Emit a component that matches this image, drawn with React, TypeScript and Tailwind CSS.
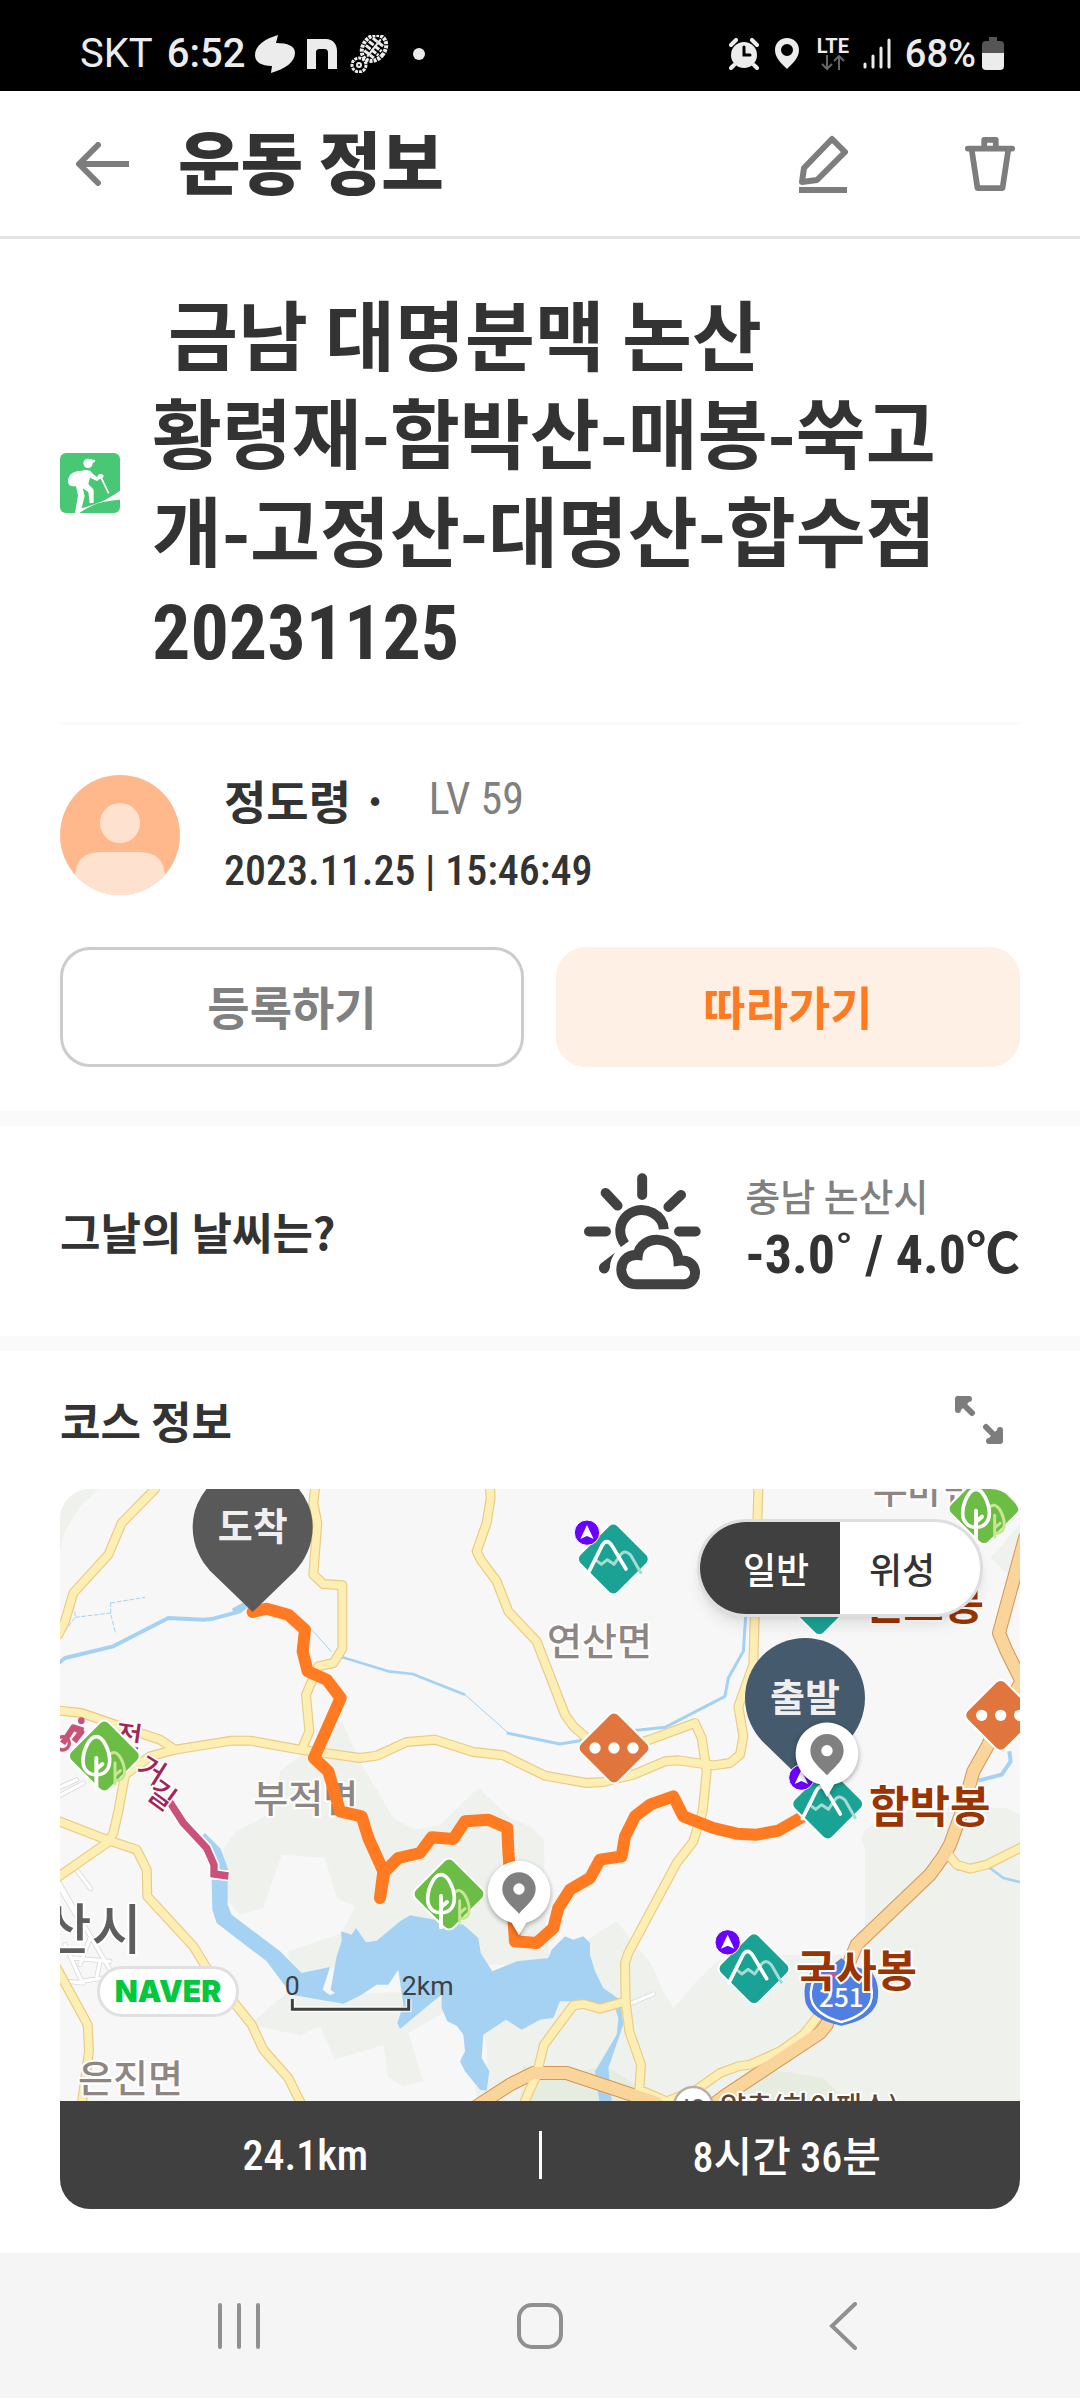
import React from "react";

const narrow = "font-['Roboto_Condensed','Noto_Sans_CJK_KR',sans-serif]";

function StatusBar() {
  return (
    <div className="flex h-[91px] items-center justify-between bg-black pt-4 pr-[76px] pb-0 pl-20 font-['Roboto',sans-serif] text-[40px] leading-none text-[#ececec]">
      <div className="flex items-center">
        <span>SKT</span>
        <span className="ml-3.5 font-medium">6:52</span>
        <svg className="ml-2.5 h-[38px] w-10" viewBox="0 0 40 38" fill="#ececec">
          <path d="M23 0C9 4 0 11 0 20c0 7 6 11 17 11l-1 7c14-4 24-11 24-20 0-7-7-10-19-10Z" />
        </svg>
        <svg className="ml-3 h-[30px] w-[30px]" viewBox="0 0 30 30" fill="#ececec">
          <path d="M0 30V0h19c7 0 11 5 11 12v18H21V14c0-3-1-4-4-4h-4c-3 0-4 1-4 4v16Z" />
        </svg>
        <svg className="ml-3 h-[38px] w-10" viewBox="0 0 40 38" fill="none" stroke="#ececec">
          <g strokeWidth="3">
            <circle cx="10" cy="30" r="7" strokeDasharray="3 1" />
            <circle cx="10" cy="30" r="2" strokeWidth="2" />
          </g>
          <g transform="rotate(38 25 13)">
            <ellipse cx="25" cy="13" rx="11" ry="14" strokeWidth="4" strokeDasharray="3 1" />
            <path d="M18 6h14M17 11h16M17 16h16M19 21h12" strokeWidth="3" strokeDasharray="6 1" />
            <path d="M25 2v22" strokeWidth="2" />
          </g>
        </svg>
        <span className="ml-6 size-3 rounded-full bg-[#ececec]" />
      </div>
      <div className="flex items-center">
        <svg className="h-8 w-[30px]" viewBox="0 0 30 32">
          <circle cx="15" cy="17" r="13" fill="#ececec" />
          <path d="M2 7l5-5M28 7l-5-5M5 27l-3 3M25 27l3 3" stroke="#ececec" strokeWidth="4" strokeLinecap="round" />
          <path d="M15 9v8h6" stroke="#000" strokeWidth="3" fill="none" strokeLinecap="round" />
        </svg>
        <svg className="ml-4 h-8 w-6" viewBox="0 0 24 32">
          <path d="M12 0C5 0 0 5 0 12c0 8 7 14 12 19 5-5 12-11 12-19C24 5 19 0 12 0Zm0 18a6 6 0 1 1 0-12 6 6 0 0 1 0 12Z" fill="#ececec" />
        </svg>
        <div className="ml-4 flex w-9 flex-col items-center">
          <span className="text-[20px] leading-[18px] font-bold">LTE</span>
          <svg className="h-4 w-6" viewBox="0 0 24 16" fill="none" stroke="#666" strokeWidth="2">
            <path d="M6 0v14M1 9l5 5 5-5M18 15V1M13 6l5-5 5 5" />
          </svg>
        </div>
        <svg className="ml-3 h-8 w-7" viewBox="0 0 28 32" stroke="#ececec" strokeWidth="3" strokeLinecap="round">
          <path d="M2 26v3M10 18v11M18 10v19M26 2v27" />
        </svg>
        <span className="ml-3.5 text-[38px] font-medium">68%</span>
        <svg className="ml-1.5 h-[34px] w-[22px]" viewBox="0 0 22 34">
          <path d="M7 0h8v4h3a4 4 0 0 1 4 4v8H0V8a4 4 0 0 1 4-4h3Z" fill="#555" />
          <path d="M0 16h22v13a4 4 0 0 1-4 4H4a4 4 0 0 1-4-4Z" fill="#ececec" />
        </svg>
      </div>
    </div>
  );
}

function Header() {
  return (
    <header className="flex h-[148px] items-center border-b-[3px] border-[#e3e3e3] pr-16 pl-[72px]">
      <button aria-label="뒤로" className="p-1">
        <svg className="h-11 w-[54px]" viewBox="0 0 54 44" fill="none" stroke="#7d7d7d" strokeLinejoin="round">
          <path d="M53 22H4" strokeWidth="6" />
          <path d="M22 3L3 22l19 19" strokeWidth="6" strokeLinecap="round" />
        </svg>
      </button>
      <h1 className="ml-11 flex-1 pb-2 text-[68px] leading-[72px] font-black">운동 정보</h1>
      <button aria-label="수정" className="mr-[116px]">
        <svg className="h-[58px] w-[50px]" viewBox="0 0 50 58" fill="none" stroke="#7d7d7d">
          <path d="M34 4L6 33 4 47l15-2 28-28Z" strokeWidth="6" strokeLinejoin="round" />
          <path d="M1 55h48" strokeWidth="6" />
        </svg>
      </button>
      <button aria-label="삭제">
        <svg className="h-[58px] w-[52px]" viewBox="0 0 54 58" fill="none" stroke="#7d7d7d" strokeWidth="6" strokeLinejoin="round" strokeLinecap="round">
          <path d="M4 13h46M21 12V4h12v8M8 14l6 40h26l6-40" />
        </svg>
      </button>
    </header>
  );
}

function HikerIcon() {
  return (
    <svg className="size-[60px] shrink-0 rounded-[6px]" viewBox="30 33 180 180">
      <rect x="30" y="33" width="180" height="180" fill="#48c774" />
      <g fill="#fff">
        <circle cx="114" cy="64" r="14" />
        <path d="M112 50l24 4-2 7-14 1Z" />
        <path d="M96 86C108 82 122 84 127 94L141 105 147 97C150 95 160 96 161 102 161 108 154 109 151 110L141 117 120 107 115 126 131 143V182L119 184 115 150 98 139 104 162 93 206 75 213 84 160 78 133C64 134 54 132 54 118 54 98 70 86 96 86Z" />
        <path d="M76 213l12-13c50-12 80-25 122-54v27c-55 4-80 12-122 40Z" />
      </g>
      <path d="M152 104l24 50" stroke="#fff" strokeWidth="5" />
    </svg>
  );
}

function WeatherIcon() {
  return (
    <svg className="h-[117px] w-[117px] shrink-0" viewBox="78 44 352 352" fill="none" stroke="#414141" strokeLinecap="round">
      <path d="M253 60v50M143 104l36 38M370 110l-38 36M93 220h51M364 220h50" strokeWidth="30" />
      <path d="M201 258C158 200 222 130 285 164c21 12 32 30 33 49" strokeWidth="30" strokeLinecap="butt" />
      <path d="M172 283l-45 35c-10 14 0 30 14 28 9-1 12-8 15-18 1-20 7-32 16-45Z" fill="#414141" stroke="none" />
      <path d="M240 291c-66-5-65 88-5 88h145c48-6 42-80-18-71-4-82-115-80-122-17Z" strokeWidth="30" strokeLinejoin="miter" />
    </svg>
  );
}

const yellowRoads = [
  "M345 33L245 135 205 230 100 345 75 430 55 470",
  "M825 33L820 75 832 135 820 290 850 318 907 322V512L880 555 835 565 798 650 808 760 785 815",
  "M1350 33L1352 60 1340 135 1310 220 1322 245 1370 310 1405 400 1490 490 1575 710 1600 745 1640 780 1720 815 1830 785 1965 735 1985 780 2000 880 1988 1000 1960 1090 1910 1155 1765 1425 1755 1455 1757 1570 1768 1660 1803 1760 1798 1835 1880 1870 1970 1835 2040 1785 2095 1765 2130 1760 2220 1720 2290 1670 2330 1620",
  "M50 697L125 705 240 745 360 785 405 815",
  "M205 1090L220 1065 235 1000 255 890 330 835 405 815 575 788H630L780 815 960 840 1010 833 1100 792 1185 785 1300 822 1390 832 1515 893 1640 915 1690 912 1780 890 1875 850 1915 847 2020 862 2070 855 2100 830 2110 775 2095 685 2140 560 2155 33",
  "M50 1027L205 1087 290 1115 320 1175 322 1255 460 1405 500 1470 635 1640 670 1715 745 1800 785 1880",
  "M205 1092L50 1200",
  "M50 1470L143 1640 147 1720 125 1880",
  "M1450 1880L1490 1790 1512 1700 1600 1582 1630 1578 1680 1592 1757 1570",
  "M2725 1130L2750 1160 2790 1172 2840 1160 2950 1105",
];

const orangeRoads = [
  "M2955 180L2877 465 2900 520 2945 610 2882 720 2845 800 2800 880 2770 990 2730 1100 2710 1135 2670 1190 2450 1400 2400 1520 2360 1640 2340 1665 2060 1850 2020 1880",
  "M1310 1885L1410 1820 1480 1785H1580L1850 1875",
];

const whiteRoads =
  "M105 1170L152 1232M55 1210L210 1475M60 1230L130 1350M75 1400L125 1510 190 1500M100 1440L210 1450M150 1380L120 1460M85 1510L130 1515M180 1450L170 1500M55 930L110 905M55 955L130 915M1775 1575L1840 1548";

const greens = [
  "M60 33H175L120 85 75 160 60 215Z",
  "M905 730L960 850 1060 1020 1125 1055 1200 1040 1315 930 1410 1020 1470 1045 1512 1085 1515 1300 1530 1460 900 1460 790 1500 745 1440V1420L905 1365 945 1285 890 1260 855 1140 725 1130 670 1290 600 1310 565 1270 550 1110 590 1060 700 1000 720 880 800 820 850 800Z",
  "M755 1550L1210 1540V1605L1105 1665 1150 1810 1090 1825 1045 1800 1030 1700 885 1745 840 1645 780 1672 630 1640 745 1540Z",
  "M1330 1660L1400 1560 1650 1380 1730 1330 1835 1460 1865 1530 1900 1590 1960 1520 2030 1450 2100 1430H2475V1120L2465 1080 2470 1060 2540 1010 2640 990 2900 990 2940 1010V1870H1310L1305 1825 1340 1840V1700Z",
  "M2850 240L2940 140V320Z",
];

const lake =
  "M515 1205H563V1280L575 1310 720 1420 785 1485 870 1467 848 1535 870 1552 885 1545 872 1535 890 1435 905 1390 903 1360 935 1370 948 1350 978 1393 1010 1388 1080 1330 1110 1312 1270 1340 1315 1380 1322 1425 1357 1480 1430 1450 1525 1440 1535 1415 1575 1375 1600 1385 1630 1375 1650 1395V1430L1665 1480 1690 1530 1740 1565 1750 1640 1705 1770 1715 1870H1678L1665 1780 1730 1670 1735 1620 1725 1590 1630 1570H1560L1540 1620 1500 1625 1445 1655 1398 1625 1330 1670 1325 1740 1348 1780 1340 1838 1320 1835 1275 1780 1260 1750 1275 1720 1270 1670 1250 1643 1222 1630 1205 1590V1550L1180 1570 1080 1653 1072 1635 1090 1580 1075 1475 1045 1520H1010L965 1550 910 1577 840 1565 755 1550 680 1450 530 1335 517 1295Z";

const route =
  "M638 402L680 392 745 410 795 455 788 520 803 580 860 605 902 660 822 840 865 880 900 1000 965 1015 985 1080 1030 1180 1020 1260 1033 1182 1075 1140 1140 1125 1175 1078 1240 1083 1275 1030 1345 1025 1402 1050 1405 1120 1425 1390 1490 1395 1540 1350 1555 1290 1590 1235 1650 1200 1680 1145 1745 1135 1755 1075 1785 1015 1830 980 1900 955 1930 1015 2020 1050 2090 1067 2150 1070 2215 1058 2295 1012";

function Diamond({ x, y, color, children }: { x: number; y: number; color: string; children?: React.ReactNode }) {
  return (
    <g transform={`translate(${x} ${y})`}>
      <rect x="-81" y="-81" width="162" height="162" rx="20" transform="rotate(45)" fill={color} stroke="#fff" strokeWidth="6" />
      {children}
    </g>
  );
}

function Mountain({ x, y, badge = true }: { x: number; y: number; badge?: boolean }) {
  return (
    <Diamond x={x} y={y} color="#1aa394">
      <path d="M-54 2l18 14 18-14 20 14 14-20q16-30 36-8l32 56" fill="none" stroke="#a6dbd3" strokeWidth="9" strokeLinejoin="round" />
      <path d="M-76 44l42-84q14-24 30 0l42 70" fill="none" stroke="#fff" strokeWidth="11" strokeLinecap="round" />
      {badge && (
        <g>
          <circle cx="-79" cy="-79" r="38" fill="#6a00ff" stroke="#fff" strokeWidth="3" />
          <path d="M-79-102l20 42-20-9-20 9Z" fill="#fff" />
        </g>
      )}
    </Diamond>
  );
}

function Tree({ x, y }: { x: number; y: number }) {
  return (
    <Diamond x={x} y={y} color="#6cbd45">
      <g fill="none" strokeLinecap="round">
        <path d="M14-2c18-22 36 2 44 30 8 30-2 46-24 46M32 20v64M32 58l16-14" stroke="#c8e594" strokeWidth="9" />
        <path d="M-24-58c-22 0-40 44-40 72 0 26 16 42 40 42s40-16 40-42c0-28-18-72-40-72Z" stroke="#fff" strokeWidth="11" fill="#6cbd45" />
        <path d="M-24 6v94M-24 40l18-16" stroke="#fff" strokeWidth="12" />
      </g>
    </Diamond>
  );
}

function More({ x, y }: { x: number; y: number }) {
  return (
    <Diamond x={x} y={y} color="#e0763d">
      <g fill="#fff">
        <circle cx="-57" r="17" />
        <circle r="17" />
        <circle cx="57" r="17" />
      </g>
    </Diamond>
  );
}

function EndPin({ x, y, color, label }: { x: number; y: number; color: string; label: string }) {
  return (
    <g transform={`translate(${x} ${y})`}>
      <path d="M0 254L-128 130C-156 100-180 55-180 0a180 180 0 0 1 360 0c0 55-24 100-52 130Z" fill={color} />
      <text y="38" textAnchor="middle" fontSize="114" className="fill-[#efefef] font-bold">
        {label}
      </text>
    </g>
  );
}

function SpotPin({ x, y }: { x: number; y: number }) {
  return (
    <g transform={`translate(${x} ${y})`}>
      <path d="M0 129L-22 91a94 94 0 1 1 44 0Z" fill="#fff" className="drop-shadow-[0_6px_8px_rgba(0,0,0,0.35)]" />
      <path d="M0 64C-20 40-50 22-50-10a50 50 0 0 1 100 0C50 22 20 40 0 64Z" fill="#808080" />
      <circle cy="-10" r="17" fill="#fff" />
    </g>
  );
}

function Label({ x, y, size, className, children }: { x: number; y: number; size: number; className: string; children: string }) {
  return (
    <text x={x} y={y} fontSize={size} stroke="#fff" strokeWidth="12" strokeLinejoin="round" paintOrder="stroke" className={className}>
      {children}
    </text>
  );
}

function CourseMap() {
  return (
    <svg
      className="block h-[612px] w-full bg-[#f7f7f7] font-['Noto_Sans_CJK_KR',sans-serif]"
      viewBox="60 33 2880 1836"
      preserveAspectRatio="xMidYMid slice"
      role="img"
      aria-label="코스 지도"
    >
      <g fill="#eff2ec">
        {greens.map((d) => (
          <path key={d} d={d} />
        ))}
      </g>
      <path d="M2200 1775L2350 1800 2400 1850 2420 1870H2050ZM1500 1800L1700 1765 1800 1830V1870H1440L1450 1760Z" fill="#e7ece1" />
      <path d={lake} fill="#a5d2f3" />
      <g fill="none" stroke="#a5d2f3" strokeLinejoin="round">
        <path d="M50 560L75 540 220 505 385 420 490 425 520 422 600 400 630 375" strokeWidth="12" />
        <path d="M580 400L630 372" strokeWidth="18" />
        <path d="M905 537L1045 580 1118 588 1275 650" strokeWidth="8" />
        <path d="M815 455L875 522M1275 650L1405 765" strokeWidth="3" />
        <path d="M1400 765L1560 798 1620 788 1650 772 1875 748 2055 655 2065 600 2110 520 2118 400" strokeWidth="9" />
        <path d="M485 1075L530 1120 552 1180" strokeWidth="28" />
        <path d="M2908 820L2912 850 2885 890 2815 908" strokeWidth="12" />
        <path d="M2850 1170L2890 1200 2940 1212M2750 1175h20" strokeWidth="8" />
        <path d="M105 400v18L60 480M105 418L212 405M212 375L315 358M212 373v35L227 468" strokeWidth="3" strokeDasharray="14 5" />
      </g>
      <g fill="none" strokeLinejoin="round" strokeLinecap="round">
        <path d={whiteRoads} stroke="#d9d9d9" strokeWidth="15" />
        <path d={whiteRoads} stroke="#fff" strokeWidth="10" />
        {orangeRoads.map((d) => (
          <path key={d} d={d} stroke="#d39655" strokeWidth="42" />
        ))}
        {yellowRoads.map((d) => (
          <path key={d} d={d} stroke="#eacb85" strokeWidth="30" />
        ))}
        {yellowRoads.map((d) => (
          <path key={d} d={d} stroke="#fdeeb3" strokeWidth="23" />
        ))}
        {orangeRoads.map((d) => (
          <path key={d} d={d} stroke="#f9d49b" strokeWidth="36" />
        ))}
      </g>

      <path d="M385 965L430 1035 500 1110 522 1160V1188L565 1194" fill="none" stroke="#fff" strokeWidth="32" />
      <path d="M385 965L430 1035 500 1110 522 1160V1188L565 1194" fill="none" stroke="#c9517a" strokeWidth="22" />
      <g className="fill-[#a32558] font-medium" fontSize="88" stroke="#fff" strokeWidth="10" paintOrder="stroke" textAnchor="middle">
        <text transform="translate(262 806) rotate(8)">전</text>
        <text transform="translate(318 904) rotate(32)">거</text>
        <text transform="translate(346 978) rotate(36)">길</text>
      </g>
      <g stroke="#c9517a" strokeWidth="10" fill="none">
        <circle cx="68" cy="796" r="20" />
        <path d="M68 796l32-48 24 14-22 28M100 748l30 10" strokeWidth="18" strokeLinejoin="round" />
        <circle cx="124" cy="728" r="5" />
      </g>

      <Label x={640} y={1001} size={114} className="fill-[#8e8683] font-medium">부적면</Label>
      <path d={route} fill="none" stroke="#ff7a21" strokeWidth="36" strokeLinejoin="round" strokeLinecap="round" />

      <Label x={2498} y={74} size={114} className="fill-[#8e8683] font-medium">두마면</Label>
      <Tree x={193} y={834} />
      <Tree x={1227} y={1248} />
      <Tree x={2832} y={92} />
      <Mountain x={1720} y={243} />
      <Mountain x={2338} y={365} badge={false} />
      <More x={1722} y={810} />
      <More x={2882} y={712} />

      <Label x={1521} y={532} size={114} className="fill-[#8e8683] font-medium">연산면</Label>
      <Label x={114} y={1841} size={114} className="fill-[#8e8683] font-medium">은진면</Label>
      <Label x={4} y={1412} size={164} className="fill-[#5e5e5e] font-medium">산시</Label>
      <Label x={2468} y={426} size={132} className="fill-[#9a3400] font-bold">천호봉</Label>

      <EndPin x={638} y={148} color="#595959" label="도착" />
      <EndPin x={2295} y={660} color="#455a6d" label="출발" />
      <Mountain x={2363} y={978} />
      <SpotPin x={2361} y={828} />
      <SpotPin x={1437} y={1243} />
      <Label x={2487} y={1034} size={132} className="fill-[#9a3400] font-bold">함박봉</Label>

      <path d="M2318 1480q60-10 86-36 26 26 86 36 30 40 18 94-20 50-104 66-84-16-104-66-12-54 18-94Z" fill="#4f7fe3" stroke="#4f7fe3" strokeWidth="6" />
      <path d="M2324 1500q-20 44-6 76 20 38 86 56 66-18 86-56 14-32-6-76" fill="none" stroke="#fff" strokeWidth="7" />
      <path d="M2336 1490h96" stroke="#e8505b" strokeWidth="10" />
      <text x="2404" y="1588" textAnchor="middle" fontSize="78" className="fill-white font-medium">251</text>
      <Mountain x={2142} y={1472} />
      <Label x={2267} y={1528} size={132} className="fill-[#9a3400] font-bold">국사봉</Label>

      <circle cx="1960" cy="1885" r="58" fill="#fff" stroke="#b5aeab" strokeWidth="7" />
      <text x="1960" y="1912" textAnchor="middle" fontSize="64" className="fill-[#5e5e5e] font-medium">IC</text>
      <Label x={2040} y={1918} size={86} className="fill-[#5c4534] font-medium">양촌(하이패스)</Label>

      <g className="fill-[#404040] font-['Roboto',sans-serif]" fontSize="80">
        <text x="757" y="1551" textAnchor="middle">0</text>
        <text x="1085" y="1551">2km</text>
      </g>
      <path d="M757 1563v31h349v-31" fill="none" stroke="#fff" strokeWidth="18" strokeOpacity="0.7" />
      <path d="M757 1563v31h349v-31" fill="none" stroke="#404040" strokeWidth="9" />
    </svg>
  );
}

function SystemNav() {
  return (
    <nav className="mt-11 flex h-[145px] items-center justify-around bg-[#f5f5f5] px-[86px]">
      <button aria-label="최근 앱">
        <svg className="size-12" viewBox="0 0 48 48" stroke="#909090" strokeWidth="4" strokeLinecap="round">
          <path d="M7 3v42M26 3v42M45 3v42" />
        </svg>
      </button>
      <button aria-label="홈">
        <svg className="size-12" viewBox="0 0 48 48" fill="none" stroke="#909090" strokeWidth="4">
          <rect x="3" y="3" width="42" height="42" rx="13" />
        </svg>
      </button>
      <button aria-label="뒤로 가기">
        <svg className="size-12" viewBox="0 0 48 48" fill="none" stroke="#909090" strokeWidth="4" strokeLinecap="round">
          <path d="M36 2L13 24l23 22" />
        </svg>
      </button>
    </nav>
  );
}

export default function App() {
  return (
    <div className="bg-white font-['Noto_Sans_CJK_KR',sans-serif] text-[#333]">
      <StatusBar />
      <Header />

      <main>
        <section className="px-[60px] pt-11">
          <div className="flex items-center gap-8 border-b-[3px] border-[#fafafa] pb-10">
            <HikerIcon />
            <h2 className="text-[76px] leading-[98px] font-bold">
              <span className="pl-4">금남 대명분맥 논산</span>
              <br />
              황령재-함박산-매봉-쑥고
              <br />
              개-고정산-대명산-합수점
              <br />
              <span className={narrow}>20231125</span>
            </h2>
          </div>

          <div className="mt-[38px] flex items-center gap-11">
            <svg className="size-[120px] shrink-0 rounded-full" viewBox="0 0 120 120">
              <rect width="120" height="120" fill="#ffb88c" />
              <circle cx="60" cy="48" r="20" fill="#ffe1cf" />
              <path d="M15 120v-17q0-26 26-26h38q26 0 26 26v17Z" fill="#ffe1cf" />
            </svg>
            <div className="flex flex-col">
              <p className="flex items-center leading-[72px]">
                <span className="text-[46px] font-bold">정도령 ·</span>
                <span className={`${narrow} ml-10 text-[44px] text-[#808080]`}>LV 59</span>
              </p>
              <p className={`${narrow} text-[42px] leading-[72px] font-medium`}>2023.11.25 | 15:46:49</p>
            </div>
          </div>

          <div className="mt-10 grid grid-cols-2 gap-8 pb-11 text-[46px] font-bold">
            <button className="h-[120px] rounded-[30px] border-[3px] border-[#ccc] pb-1 text-[#808080]">등록하기</button>
            <button className="h-[120px] rounded-[30px] bg-[#fff0e6] pb-1 text-[#ff7b22]">따라가기</button>
          </div>
        </section>

        <section className="flex h-60 items-center border-y-[15px] border-[#fafafa] px-[60px]">
          <h3 className="flex-1 text-[44px] font-bold">그날의 날씨는?</h3>
          <WeatherIcon />
          <div className="ml-11 pb-2">
            <p className="text-[38px] leading-[56px] font-medium text-[#808080]">충남 논산시</p>
            <p className={`${narrow} text-[54px] leading-[64px] font-bold`}>-3.0˚ / 4.0℃</p>
          </div>
        </section>

        <section className="px-[60px]">
          <div className="flex h-[138px] items-center justify-between pr-4">
            <h3 className="text-[44px] font-bold">코스 정보</h3>
            <button aria-label="지도 확대">
              <svg className="h-[50px] w-[50px]" viewBox="0 0 50 50" fill="none" stroke="#7d7d7d" strokeWidth="6" strokeLinecap="round" strokeLinejoin="round">
                <path d="M4 15V4h11M4 4l14 14M46 35v11H35M46 46L32 32" />
                <path d="M6 6h6L6 12ZM44 44h-6l6-6Z" fill="#7d7d7d" />
              </svg>
            </button>
          </div>

          <div className="relative overflow-hidden rounded-[30px]">
            <CourseMap />
            <div className="absolute top-[30px] right-[37px] flex overflow-hidden rounded-full border-[3px] border-[#dedede] bg-white text-[36px] leading-[92px] font-medium shadow-lg">
              <button aria-pressed="true" className="w-[140px] bg-[#404040] pl-3 text-white">일반</button>
              <button aria-pressed="false" className="w-[140px] pr-4 text-[#333]">위성</button>
            </div>
            <a
              href="#naver"
              className="absolute top-[477px] left-[37px] flex h-[51px] w-[142px] items-center justify-center rounded-full border-[3px] border-[#e0e0e0] bg-white font-['Inter',sans-serif] text-[30px] font-black text-[#03c73c]"
            >
              NAVER
            </a>
            <div className="flex h-[108px] items-center bg-[#404040] text-white">
              <span className={`${narrow} flex-1 pl-3 text-center text-[42px] font-medium`}>24.1km</span>
              <span className="h-12 w-[3px] bg-white" />
              <span className="flex-1 pl-3 text-center text-[42px] font-medium">
                <span className={narrow}>8</span>시간 <span className={narrow}>36</span>분
              </span>
            </div>
          </div>
        </section>
      </main>

      <SystemNav />
    </div>
  );
}
